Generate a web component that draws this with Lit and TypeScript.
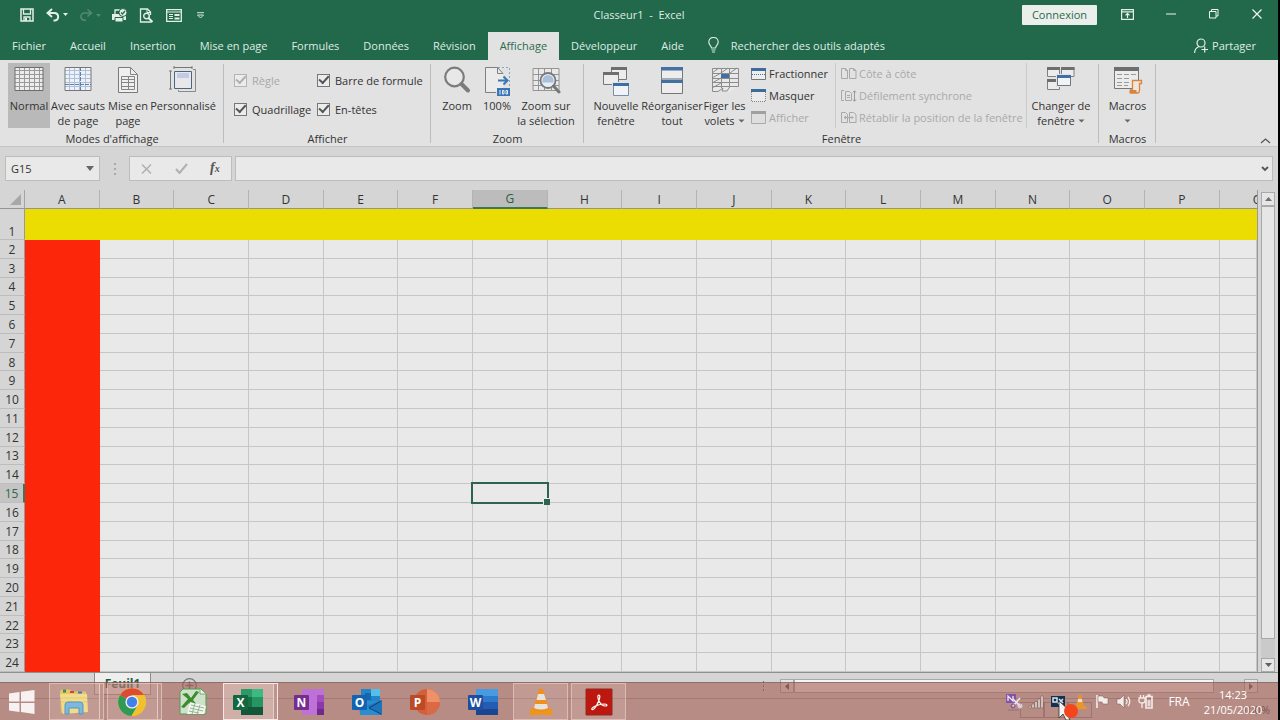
import { LitElement, html, svg, css } from "lit";
import { customElement } from "lit/decorators.js";
import { classMap } from "lit/directives/class-map.js";

const icon = (w: number, h: number, body: unknown) =>
  html`<svg width=${w} height=${h} viewBox="0 0 ${w} ${h}" fill="none" aria-hidden="true">${body}</svg>`;

const caret = icon(7, 4, svg`<path d="M0.500 0.500h6l-3 3z" fill="#666"/>`);

const icons = {
  save: icon(14, 14, svg`<path d="M1 1h12v12H1z" stroke="#e4efe8" stroke-width="1.500"/><path d="M3.500 1v5h7V1M4 13V9h6v4" stroke="#e4efe8" stroke-width="1.300"/><path d="M5 10h2v3H5z" fill="#e4efe8"/>`),
  undo: icon(22, 14, svg`<path d="M2 5h7a3.800 3.800 0 0 1 0 7.500H7.500" stroke="#e4efe8" stroke-width="1.900"/><path d="M6 1L1.500 5L6 9" stroke="#e4efe8" stroke-width="1.900"/><path d="M17 5h5l-2.500 3z" fill="#e4efe8"/>`),
  redo: icon(22, 14, svg`<g opacity=".25"><path d="M12 5H5.500a3.600 3.600 0 0 0 0 7.200H7M8.500 1.500L12.500 5L8.500 8.500" stroke="#e4efe8" stroke-width="1.600"/><path d="M17 6h5l-2.500 3z" fill="#e4efe8"/></g>`),
  print: icon(17, 15, svg`<path d="M1 6h14v6H1z" fill="#e4efe8"/><path d="M4 6V2h5" stroke="#e4efe8" stroke-width="1.300"/><path d="M4 9.500h8v4.500H4z" fill="#e4efe8" stroke="#22684a"/><circle cx="12" cy="4.500" r="4" fill="#e4efe8" stroke="#22684a"/><path d="M10 4.500l1.500 1.500L14 3" stroke="#22684a" stroke-width="1.200"/>`),
  preview: icon(15, 15, svg`<path d="M12.500 14H1.500V1h7l3 3v3" stroke="#e4efe8" stroke-width="1.300"/><path d="M8 1v3.500h3.500" stroke="#e4efe8"/><circle cx="7.500" cy="8" r="2.800" stroke="#e4efe8" stroke-width="1.400"/><path d="M9.500 10l4 4" stroke="#e4efe8" stroke-width="2"/>`),
  form: icon(16, 13, svg`<path d="M.7.700h14.600v11.600H.7z" stroke="#e4efe8" stroke-width="1.300"/><path d="M1 3h14M3 5.500h4M3 7.500h4M3 9.500h4" stroke="#e4efe8" stroke-width="1.200"/><path d="M8.500 5h5v2h-5zM8.500 8.500h5v2h-5z" fill="#e4efe8"/>`),
  more: icon(9, 7, svg`<path d="M1 .7h7M1.500 3h6l-3 3z" stroke="#d4e4da"/>`),
  ribbonOpt: icon(13, 11, svg`<path d="M.6.600h11.800v9.800H.6zM.6 2.800h11.800" stroke="#e4efe8" stroke-width="1.200"/><path d="M6.500 9V4.500M4.500 6.300l2-2 2 2" stroke="#e4efe8" stroke-width="1.200"/>`),
  min: icon(10, 2, svg`<path d="M0 1h10" stroke="#f0f5f2"/>`),
  restore: icon(10, 10, svg`<path d="M.5 2.500h6.500V9H.5zM2.500 2.500v-2h6.500V7H7" stroke="#f0f5f2"/>`),
  close: icon(10, 10, svg`<path d="M.5.500l9 9M9.500.500l-9 9" stroke="#f0f5f2" stroke-width="1.200"/>`),
  bulb: icon(11, 16, svg`<path d="M3.500 11c0-2-2.700-3-2.700-6a4.700 4.700 0 0 1 9.400 0c0 3-2.700 4-2.700 6zM3.500 13h4M4 15h3" stroke="#d6e6dc" stroke-width="1.200"/>`),
  share: icon(14, 15, svg`<circle cx="7" cy="5" r="4" stroke="#e4efe8" stroke-width="1.200"/><path d="M.6 15c0-3.500 2-5.500 4.400-6.500M7.500 11.500H14M10.700 8.500v6" stroke="#e4efe8" stroke-width="1.200"/>`),
  normal: icon(30, 26, svg`<path d="M1 1.500h28v23H1z" fill="#ececec"/><path d="M1 4.500h28M1 8.500h28M1 12.500h28M1 16.500h28M1 20.500h28M5.500 1v24M10.500 1v24M15.500 1v24M20.500 1v24M25.500 1v24" stroke="#9a9a9a"/><path d="M1 1.500h28v23H1z" stroke="#6d6d6d"/>`),
  breaks: icon(28, 26, svg`<path d="M1 1.500h26v23H1z" fill="#eef2f8"/><path d="M1 4.500h26M1 8.500h26M1 12.500h26M1 16.500h26M1 20.500h26M5.500 1v24M10.500 1v24M15.500 1v24M21.500 1v24" stroke="#adc0da"/><path d="M1 18.500h26M16.500 1v24" stroke="#5d7fa8" stroke-dasharray="4 1"/><path d="M1 1.500h26v23H1z" stroke="#777"/>`),
  page: icon(22, 28, svg`<path d="M1.500 1.500h12l7 7v18h-19z" fill="#efefef" stroke="#7b7b7b"/><path d="M13.500 1.500v7h7M4.500 10.500h13v13h-13zM4.500 13.500h13M4.500 16.500h13M4.500 20.500h13M11.500 10v13" stroke="#858585"/>`),
  custom: icon(28, 27, svg`<path d="M5.500 5.500h17v17h-17z" fill="#e8e8ea" stroke="#4d6480"/><path d="M8 7h12v5H8z" fill="#c2cbe6"/><path d="M5 1.500h18M5 0v3M23 0v3M1.500 5v18M0 5h3M0 23h3" stroke="#777"/><path d="M24 3.500h2.500v22h-17V24" stroke="#8a8a8a"/>`),
  zoom: icon(28, 28, svg`<circle cx="11.500" cy="11" r="9.300" fill="#e8e8e8" stroke="#7b7b7b" stroke-width="2.200"/><path d="M18.500 18l6.500 6.500" stroke="#7b7b7b" stroke-width="4" stroke-linecap="round"/>`),
  hundred: icon(26, 30, svg`<path d="M1.500 1.500h12l5.500 6v18h-17.500z" fill="#ebebeb"/><path d="M12 26.500H1.500v-25h12l5.500 6" stroke="#808080"/><path d="M13.500 1.500v6H19" stroke="#808080"/><path d="M14 1.500h11.500V20" stroke="#8aa5c6" stroke-dasharray="2 2"/><path d="M14 14.500h9M19.500 10.500l4 4-4 4" stroke="#3a76b5" stroke-width="2"/><path d="M13 22h13v8H13z" fill="#3a76b5"/><path d="M16 24v4.500M18.500 24.500h1.500v3.500h-1.500zM22 24.500h1.500v3.500H22z" stroke="#e4ecf6"/>`),
  zoomSel: icon(30, 28, svg`<path d="M2 2.500h26v22H2zM2 8.500h26M2 14.500h26M2 19.500h26M7.500 2v22M13.500 2v22M20.500 2v22" fill="#e9e9e9" stroke="#949494"/><circle cx="17" cy="14.500" r="7.500" fill="#e6edf5" stroke="#777" stroke-width="1.800"/><path d="M11.500 14.500a5.500 5.500 0 0 1 11 0v2h-11z" fill="#a9c0db"/><path d="M22.500 20l5.500 6" stroke="#777" stroke-width="3" stroke-linecap="round"/>`),
  newWin: icon(28, 30, svg`<path d="M9.500 1.500h15v12h-15z" fill="#ececec" stroke="#777"/><path d="M9 1h16v3H9z" fill="#6e6e6e"/><path d="M1.500 6.500h15v12h-15z" fill="#ececec" stroke="#777"/><path d="M1 6h16v3H1z" fill="#6e6e6e"/><path d="M10 16h16v14H10z" fill="#e2e2e2"/><path d="M11.500 17.500h15v12h-15z" fill="#f0f3f7" stroke="#7a8ea8"/><path d="M11 17h16v3H11z" fill="#3c6ea8"/>`),
  arrange: icon(24, 28, svg`<path d="M1.500 1.500h21v26h-21z" fill="#ededed" stroke="#777"/><path d="M1 1h22v3.500H1zM1 13.500h22V17H1z" fill="#44719f"/><path d="M1.500 12.500h21" stroke="#aaa"/>`),
  freeze: icon(28, 27, svg`<path d="M1.500 2.500h26v17l-8 6H14l-4-1-6 1H1.500z" fill="#e8e8e8"/><path d="M19 20.500l-3 4.500h-5l1-3-5 3.500H1.500v-23h26v18H1.500M1.500 7.500h26M1.500 12.500h26M1.500 16.500h26M10.500 2v20M18.500 2v19M1 7l7-5M10 7l7-5M19 7l7-5M1 12l9-5M1 17l9-5M1 22l9-5" stroke="#8c8c8c"/><path d="M10 8h8v4h-8z" fill="#416fa3"/>`),
  split: icon(15, 12, svg`<path d="M.5.500h14v11H.5z" fill="#ededed" stroke="#777"/><path d="M0 0h15v3H0z" fill="#3f6c9e"/><path d="M1 6.500h13" stroke="#50759e" stroke-dasharray="1 1"/>`),
  hide: icon(15, 13, svg`<path d="M.5 3v9.500h14V3" fill="#ebebeb" stroke="#858585" stroke-dasharray="1 1"/><path d="M0 0h15v3H0z" fill="#3f6c9e"/>`),
  show: icon(15, 13, svg`<path d="M.5.500h14v12H.5z" fill="#dedede" stroke="#aaa"/><path d="M0 0h15v3H0z" fill="#a0a0a0"/>`),
  side: icon(16, 11, svg`<path d="M.5.500h4l2 2v8h-6zM8.500.500h4l2.500 2v8H8.500zM4.500.500v2h2M12.500.500v2H15" stroke="#a8a8a8"/>`),
  sync: icon(16, 12, svg`<path d="M3 10.500H.5V.500H3M4.500 1.500h4l2 2v7h-6zM6 5.500h3M6 7.500h3" stroke="#a8a8a8"/><path d="M13.500 1v10M12 2.500L13.500.700 15 2.500M12 9.500l1.500 1.800L15 9.500" stroke="#999"/>`),
  reset: icon(16, 11, svg`<path d="M.5.500h4l2 2v8h-6zM8.500.500h4l2.500 2v8H8.500zM3 5.500h9M5 4L3 5.500 5 7M10.500 4L12 5.500 10.500 7" stroke="#a8a8a8"/>`),
  switchWin: icon(28, 25, svg`<path d="M.5 1.500h12v9H.5zM14.500 1.500h12.500v9H14.500zM.5 14.500h12v9H.5z" fill="#ececec" stroke="#808080"/><path d="M0 1h13v3H0zM14 1h13.500v3H14zM0 13h13v3H0z" fill="#6e6e6e"/><path d="M9 8h15v13H9z" fill="#e2e2e2"/><path d="M10.500 9.500h13v10h-13z" fill="#f0f3f7" stroke="#777"/><path d="M10 9h14v3H10z" fill="#3f6fa6"/>`),
  macros: icon(30, 28, svg`<path d="M1.500 1.500h24v21h-24z" fill="#ececec" stroke="#777"/><path d="M1 1h25v4H1z" fill="#6e6e6e"/><path d="M4 8.500h5M11 8.500h5M18 8.500h5M4 12.500h5M11 12.500h5M4 16.500h5M11 16.500h5M4 19.500h5M11 19.500h4" stroke="#9a9a9a"/><path d="M19.500 14.500h9v3h-2v7q0 2-2 2.500h-7v-3h2z" fill="#efe7df" stroke="#d8843f" stroke-width="1.300"/><path d="M16.500 24h7v3h-7z" fill="#d8843f"/>`),
  collapse: icon(11, 6, svg`<path d="M1 5l4.500-4L10 5" stroke="#555" stroke-width="1.200"/>`),
  cross: icon(11, 10, svg`<path d="M1 .5l9 9M10 .5l-9 9" stroke="#b0b0b0" stroke-width="1.500"/>`),
  tick: icon(13, 11, svg`<path d="M1 6l3.500 4L12 1" stroke="#b0b0b0" stroke-width="2"/>`),
  down: icon(9, 6, svg`<path d="M0 0h8L4 5z" fill="#666"/>`),
  chevron: icon(8, 6, svg`<path d="M1 1l3 3 3-3" stroke="#555" stroke-width="1.800"/>`),
  triUp: icon(7, 4, svg`<path d="M0 4h7L3.500 0z" fill="#707070"/>`),
  triDown: icon(7, 4, svg`<path d="M0 0h7L3.500 4z" fill="#606060"/>`),
  triLeft: icon(4, 7, svg`<path d="M4 0v7L0 3.500z" fill="#555"/>`),
  triRight: icon(4, 7, svg`<path d="M0 0v7l4-3.500z" fill="#666"/>`),
  plus: icon(15, 15, svg`<circle cx="7.500" cy="7.500" r="6.800" stroke="#777" stroke-width="1.200"/><path d="M7.500 3.500v8M3.500 7.500h8" stroke="#777" stroke-width="1.500"/>`),
};

const office = (letter: string, dark: string, art: unknown) => html`<svg width="32" height="28" viewBox="0 0 32 28" aria-hidden="true">
  ${art}
  <rect x="1" y="7" width="15" height="15" rx="1" fill=${dark}/>
  <text x="8.500" y="18.500" text-anchor="middle" font-size="12" font-weight="700" fill="#fff" font-family="Open Sans, sans-serif">${letter}</text>
</svg>`;

const apps = [
  { name: "Explorateur de fichiers", open: true, stack: true, art: icon(32, 28, svg`<path d="M2 3l2-1.500h8l2 2h14v20L3 25z" fill="#e3c66a"/><path d="M5 1.500h3v3H5z" fill="#3f8b4b"/><path d="M12 3h4v2h-4z" fill="#c44"/><path d="M20 3.500h4v2h-4z" fill="#4573bd"/><path d="M2 6h27l1 18-25 2z" fill="#f1dc8e"/><path d="M3 10h26M3 14h26" stroke="#e2c973"/><path d="M7 17q0-3 3-3h12q3 0 3 3v9h-4v-6H11v6H7z" fill="#7db9de" stroke="#5795c0"/>`) },
  { name: "Google Chrome", open: true, stack: true, art: html`<svg width="28" height="28" viewBox="0 0 28 28" aria-hidden="true"><circle cx="14" cy="14" r="14" fill="#f2bf2e"/><path d="M14 14L2 7A14 14 0 0 1 26.100 7H14z" fill="#dc4a38"/><path d="M14 14L1.900 7A14 14 0 0 0 13.500 28L20 17z" fill="#2f9a55"/><path d="M14 7h12.100A14 14 0 0 1 13.500 28L20 17z" fill="#f2bf2e"/><circle cx="14" cy="14" r="6.600" fill="#eee"/><circle cx="14" cy="14" r="5.200" fill="#4180e8"/></svg>` },
  { name: "Excel 2010", open: false, art: icon(30, 28, svg`<path d="M5 1h18l5 5v20H2V4z" fill="#cfe0cb" stroke="#4d9c50"/><path d="M22 1v5h6" fill="#f0f5ee" stroke="#6faf6c"/><path d="M4 6l5-1 4 5 5-7 3 1-6 8 6 7-6 1-4-5-5 5-3-1 7-8z" fill="#3c8c2d"/><path d="M12 14l16 4-2 8H9z" fill="#f2f5ef"/><path d="M13 17l13 3M12 20l13 3M11 23l10 2M17 15l-3 11M22 17l-3 9" stroke="#93b793"/>`) },
  { name: "Excel", open: true, stack: true, art: office("X", "#13683f", svg`<path d="M9 1h11v8H9z" fill="#2a9b66"/><path d="M20 1h11v8H20z" fill="#3fb982"/><path d="M9 9h11v10H9z" fill="#17724a"/><path d="M20 9h11v10H20z" fill="#259561"/><path d="M9 19h22v8H9z" fill="#14563a"/>`) },
  { name: "OneNote", open: false, art: office("N", "#762c91", svg`<path d="M9 1h22v26H9z" fill="#be72d8"/><path d="M24 7h7v7h-7z" fill="#a24cc0"/><path d="M24 14h7v7h-7z" fill="#8a3aa8"/><path d="M24 21h7v6h-7z" fill="#6f2a89"/>`) },
  { name: "Outlook", open: false, art: office("O", "#1264b0", svg`<path d="M10 1h19v14H10z" fill="#2385c9"/><path d="M20 1h9v7h-9z" fill="#55bfea"/><path d="M14 5h6v7h-6z" fill="#1668ad"/><path d="M8 13h23v14H9z" fill="#278fd1"/><path d="M31 12v15L16 18z" fill="#1c74bd"/><path d="M30 13L18 20l12 6" stroke="#123d71" fill="none"/>`) },
  { name: "PowerPoint", open: false, art: office("P", "#bd4a25", svg`<circle cx="18" cy="14" r="13" fill="#d4603b"/><path d="M18 1a13 13 0 0 1 13 13H18z" fill="#ee9068"/><path d="M18 14h13a13 13 0 0 1-13 13z" fill="#d96a45"/>`) },
  { name: "Word", open: false, art: office("W", "#1d4e9f", svg`<path d="M9 1h22v7H9z" fill="#479be0"/><path d="M9 8h22v6H9z" fill="#2f7acb"/><path d="M9 14h22v7H9z" fill="#235cb2"/><path d="M9 21h22v6H9z" fill="#1a4590"/>`) },
  { name: "VLC", open: true, art: icon(26, 28, svg`<path d="M3 20h20l2 7H1z" fill="#ee951c"/><path d="M11 1q2-1 4 0l6 21q-8 4-16 0z" fill="#ef8f1e"/><path d="M10 6h6l2 6H8.500zM7 16h12l1 4q-7 3-14 0z" fill="#e6e3df"/>`) },
  { name: "Adobe Acrobat", open: true, art: icon(28, 28, svg`<path d="M1 1h26v26H1z" fill="#bd1710" stroke="#8d2a22"/><path d="M14 7c-2 0-1 4 0 6 1.500 3 4.500 5 6.500 5s2-2-.5-2c-4 0-9 1.500-11.500 3s-2 3-.5 2.500c2-.5 5.500-7 6.500-11 .5-2 .5-3.500-.5-3.500z" stroke="#fff" stroke-width="1.200"/>`) },
];

const tray = [
  icon(18, 18, svg`<path d="M1 1h10v9H1z" fill="#8254a5"/><path d="M3 8V3l5 5V3" stroke="#efe6f4" stroke-width="1.300"/><path d="M8 6l8 8M15 5l-7 8" stroke="#e9e1ee" stroke-width="1.600"/><circle cx="8" cy="13" r="2" stroke="#7d549f"/><circle cx="15" cy="13" r="2" stroke="#e9e1ee"/><path d="M3 17h11" stroke="#9a6a92"/>`),
  icon(16, 14, svg`<path d="M1 11h2v2H1zM4 9h2v4H4zM7 6.500h2V13H7zM10 4h2v9h-2zM13 1h2v12h-2z" fill="#f1e8e5" stroke="#6f4e4a" stroke-width=".5"/>`),
  icon(16, 14, svg`<path d="M1 1h14v11H1z" fill="#14314f"/><path d="M3 3h4v4H3zM9 4l4 4M8 9l5-5" stroke="#d8e5ef" stroke-width="1.500"/>`),
  icon(16, 16, svg`<path d="M2 12h12l1 3H1z" fill="#e9962d"/><path d="M7 1h2l3 11H4z" fill="#e9962d"/><path d="M6.300 5h3.400l.8 3h-5z" fill="#ecdcd2"/>`),
  icon(14, 15, svg`<path d="M2 1v13" stroke="#f4ecea" stroke-width="1.600"/><path d="M3 2h5l1 2h4v6H8L7 8H3z" fill="#f4ecea" stroke="#7d5953" stroke-width=".5"/>`),
  icon(16, 15, svg`<path d="M1 5h3l4-4v13l-4-4H1z" fill="#f4ecea" stroke="#7d5953" stroke-width=".5"/><path d="M10 5q2 2.500 0 5M12 3q3.500 4.500 0 9" stroke="#f4ecea" stroke-width="1.300"/>`),
  icon(16, 15, svg`<path d="M8 2.500h6V14H8zM9.500 1h3" stroke="#f4ecea" stroke-width="1.600"/><path d="M9.500 6h3v6.500h-3z" fill="#e8d8d4"/><path d="M1 4h6v3q0 2-3 2-3 0-3-2zM2.500 4V1M5.500 4V1M4 9v5" stroke="#f4ecea" stroke-width="1.300"/>`),
];

const startLogo = icon(28, 24, svg`<path d="M1 3.500L11.500 2v9.500H1zM13 1.800L26.500 0v11.500H13zM1 13h10.500v9L1 20.500zM13 13h13.500v11L13 22z" fill="#f7f2f1"/>`);

const columns = "ABCDEFGHIJKLMNOPQ".split("");
const rows = Array.from({ length: 24 }, (_, i) => i + 1);

@customElement("app-root")
export class AppRoot extends LitElement {
  static styles = css`
    :host { display: block; --green: #22684a; --line: #c6c6c6; }
    * { box-sizing: border-box; }
    button, input { font: inherit; color: inherit; background: none; border: 0; margin: 0; padding: 0; border-radius: 0; }
    svg { display: block; flex: none; }
    .desktop { position: relative; height: 100vh; display: flex; flex-direction: column; overflow: hidden; border-right: 2px solid #000; background: #d5d5d5; color: #333; font: 11px/15px "Open Sans", "Noto Sans", sans-serif; }
    .title { display: grid; grid-template-columns: 1fr auto 1fr; align-items: center; height: 32px; padding-bottom: 2px; background: var(--green); color: #dfece4; flex: none; }
    .title h1 { margin: 0; padding-bottom: 2px; font: inherit; white-space: pre; }
    .quick, .window { display: flex; align-items: center; height: 30px; }
    .quick { padding-left: 13px; }
    .quick button { width: 27px; height: 30px; display: grid; place-items: center; }
    .quick .wide { width: 33px; }
    .window { justify-content: flex-end; }
    .window button { width: 43px; height: 30px; padding-bottom: 2px; display: grid; place-items: center; }
    .window .login { width: 75px; height: 20px; margin-right: 9px; background: #ebefec; color: #28694c; border-radius: 1px; }
    .tabs { display: flex; height: 28px; flex: none; background: var(--green); color: #dfece4; }
    .tabs button { padding: 0 12px 2px; white-space: nowrap; }
    .tabs .on { background: #e2e2e2; color: #2c6b4e; }
    .tabs .tell { display: flex; align-items: center; gap: 12px; }
    .tabs .share { display: flex; align-items: center; gap: 4px; margin-left: auto; padding: 0 22px 2px; }
    .ribbon { display: flex; height: 87px; flex: none; background: #e2e2e2; border-bottom: 1px solid #c4c4c4; position: relative; }
    .group { display: flex; flex-direction: column; justify-content: space-between; padding: 3px 0 0; position: relative; flex: none; }
    .group::after { content: ""; position: absolute; right: 0; top: 4px; bottom: 3px; width: 1px; background: #bdbdbd; }
    .group h2 { margin: 0; font: inherit; text-align: center; height: 15px; }
    .tools { display: flex; height: 65px; padding: 0 4px; }
    .modes { width: 224px; } .modes .tools { padding: 0 8px; }
    .display { width: 207px; } .zooms { width: 153px; } .zooms .tools { padding: 0 6px; }
    .windows { width: 515px; } .macro { width: 57px; }
    .big { display: flex; flex-direction: column; align-items: center; height: 65px; padding-top: 3px; text-align: center; white-space: nowrap; flex: none; }
    .big .pic { height: 32px; display: grid; place-items: center; }
    .big .pic svg { align-self: start; }
    .big span { display: block; height: 15px; }
    .big .more { display: flex; align-items: center; justify-content: center; gap: 3px; }
    .big.on { background: #b9b9b9; }
    .w40 { width: 40px; } .w42 { width: 42px; } .w44 { width: 44px; } .w49 { width: 49px; } .w56 { width: 56px; } .w58 { width: 58px; } .w66 { width: 66px; }
    .checks { display: grid; grid-template-columns: 83px auto; justify-content: start; align-content: start; row-gap: 13px; padding: 9px 10px 0; height: 65px; }
    .checks label { display: flex; align-items: center; gap: 5px; height: 16px; white-space: nowrap; }
    .checks input { appearance: none; width: 13px; height: 13px; flex: none; border: 1px solid #777; background: #ececec; display: grid; place-items: center; }
    .checks input::before { content: ""; width: 8px; height: 4px; border: solid #555; border-width: 0 0 2px 2px; transform: rotate(-48deg) translate(1px, -1px); }
    .checks .off { color: #a9a9a9; }
    .checks .off input { border-color: #b4b4b4; }
    .checks .off input::before { border-color: #b0b0b0; }
    .small { display: flex; flex-direction: column; }
    .small button { display: flex; align-items: center; gap: 3px; height: 22px; white-space: nowrap; }
    .small button:disabled { color: #a9a9a9; }
    .first { width: 84px; margin-left: 2px; }
    .second { width: 192px; padding-left: 5px; margin-right: 5px; border: solid #cbcbcb; border-width: 0 1px; }
    .second button { gap: 2px; }
    .collapse { position: absolute; right: 7px; bottom: 2px; }
    .formula { display: flex; height: 43px; flex: none; padding: 9px 5px; }
    .field { background: #e9e9e9; border: 1px solid #bdbdbd; height: 25px; display: flex; align-items: center; }
    .name { width: 95px; padding: 0 4px 0 5px; }
    .name input { flex: 1; min-width: 0; }
    .grip { width: 29px; display: flex; justify-content: center; padding-top: 7px; }
    .edit { width: 103px; justify-content: space-around; margin-right: 3px; }
    .fx { font: italic 700 14px/16px "Liberation Serif", serif; color: #555; }
    .fx small { font-size: 10px; }
    .bar { flex: 1; padding-right: 3px; }
    .bar input { flex: 1; height: 100%; }
    .work { display: flex; flex: 1; min-height: 0; border-bottom: 1px solid #8f8f8f; }
    .sheet { flex: 1; min-width: 0; display: flex; flex-direction: column; border-right: 1px solid #999; overflow: hidden; font-size: 12px; }
    .sheet thead { display: block; flex: none; }
    .sheet tbody { display: flex; flex-direction: column; flex: 1; min-height: 0; }
    .sheet tr { display: grid; grid-template-columns: 25px repeat(16, 2fr) minmax(0, 1fr); flex: 1; min-height: 0; }
    .sheet thead tr { height: 19px; }
    .sheet tbody .tall { flex: 0 0 31px; }
    .sheet th { font-weight: 400; padding: 0; overflow: hidden; display: flex; justify-content: center; align-items: center; min-height: 0; }
    .sheet thead th { border-right: 1px solid #b4b4b4; border-bottom: 1px solid #949494; }
    .sheet thead .corner { border-right-color: #a5a5a5; justify-content: flex-end; padding-right: 3px; }
    .sheet thead .edge { justify-content: flex-start; padding-left: 33px; border-right: 0; }
    .sheet thead .picked { background: #bcbcbc; color: #2b5c47; border-bottom: 2px solid #39765a; }
    .sheet tbody th { border-right: 1px solid #999; border-bottom: 1px solid #bdbdbd; padding-top: 1px; }
    .sheet tbody .tall th { align-items: flex-end; }
    .sheet tbody .picked { background: #c4c4c4; color: #2b6b4c; border-right: 2px solid #39765a; }
    .sheet td { padding: 0; background: #e9e9e9; border-right: 1px solid var(--line); border-bottom: 1px solid var(--line); position: relative; }
    .sheet .tall td { background: #ebdc02; border-color: #ebdc02; }
    .sheet .red { background: #fc260b; border-color: #fc260b; }
    .cursor { position: absolute; z-index: 1; inset: -2px; border: 2px solid #2d6350; }
    .cursor::after { content: ""; position: absolute; right: -3px; bottom: -3px; width: 6px; height: 6px; background: #2d6350; border: solid #e9e9e9; border-width: 1px 0 0 1px; }
    .vscroll { width: 20px; display: flex; flex-direction: column; align-items: center; padding: 2px 0 0; }
    .arrow { width: 14px; height: 14px; border: 1px solid #aaa; background: #e6e6e6; display: grid; place-items: center; flex: none; }
    .vtrack { width: 14px; flex: 1; background: #cacaca; padding-bottom: 19px; display: flex; }
    .vthumb { flex: 1; background: #e6e6e6; border: 1px solid #a8a8a8; }
    .bottom { display: flex; height: 25px; flex: none; padding-right: 20px; }
    .sheetTab { margin-left: 94px; width: 57px; height: 22px; background: #eee; border: 1px solid #8c8c8c; border-top: 0; color: #1d5b3c; font-size: 12px; font-weight: 700; }
    .add { width: 76px; display: flex; justify-content: center; padding-top: 5px; }
    .dots { margin-left: auto; padding: 8px 15px 0 0; }
    .hscroll { display: flex; width: 38%; height: 14px; margin-top: 6px; }
    .htrack { flex: 1; padding-right: 30px; display: flex; }
    .hthumb { flex: 1; background: #f5f5f5; border: 1px solid #aaa; }
    .status { height: 22px; flex: none; border-top: 1px solid #a5a5a5; display: flex; justify-content: flex-end; align-items: center; padding-right: 8px; color: #444; }
    .views { display: flex; margin-right: 150px; }
    .views i { width: 24px; height: 16px; border: 1px solid #999; }
    .taskbar { position: absolute; left: 0; right: 0; bottom: 0; height: 38px; display: flex; align-items: stretch; background: rgba(164, 92, 80, .6); border-top: 1px solid rgba(120, 90, 82, .6); color: #fff; }
    .start { width: 49px; padding-right: 5px; display: grid; place-items: center; }
    .apps { display: flex; gap: 3px; }
    .apps button { width: 55px; display: grid; place-items: center; border: 1px solid transparent; }
    .apps .open { background: rgba(255, 235, 230, .15); border-color: rgba(240, 215, 208, .55); }
    .apps .active { background: rgba(255, 240, 238, .35); border-color: rgba(255, 240, 238, .85); }
    .apps .stack { padding-right: 6px; box-shadow: inset -3px 0 rgba(180, 135, 127, .8), inset -4px 0 rgba(240, 220, 215, .7); }
    .tray { display: flex; margin-left: auto; align-items: center; }
    .tray button { width: 22px; height: 37px; display: grid; place-items: center; }
    .tray .lang { width: 34px; margin-left: 5px; font-size: 12px; }
    .tray .clock { width: 82px; padding-right: 8px; display: flex; flex-direction: column; justify-content: center; align-items: center; }
    .pointer { position: absolute; right: 198px; bottom: 0; }
  `;

  private big(label: string[], pic: unknown, width: string, opts: { on?: boolean; menu?: boolean } = {}) {
    const last = label.length - 1;
    return html`<button class=${classMap({ big: true, [width]: true, on: !!opts.on })}>
      <div class="pic">${pic}</div>
      ${label.map((t, i) => html`<span class=${opts.menu && i === last ? "more" : ""}>${t}${opts.menu && i === last ? caret : ""}</span>`)}
    </button>`;
  }

  private small(label: string, pic: unknown, disabled = false) {
    return html`<button ?disabled=${disabled}>${pic}${label}</button>`;
  }

  private check(label: string, off = false) {
    return html`<label class=${off ? "off" : ""}><input type="checkbox" checked ?disabled=${off} />${label}</label>`;
  }

  private renderRibbon() {
    return html`<div class="ribbon">
      <section class="group modes"><div class="tools">
        ${this.big(["Normal"], icons.normal, "w42", { on: true })}
        ${this.big(["Avec sauts", "de page"], icons.breaks, "w56")}
        ${this.big(["Mise en", "page"], icons.page, "w44")}
        ${this.big(["Personnalisé"], icons.custom, "w66")}
      </div><h2>Modes d'affichage</h2></section>
      <section class="group display"><div class="checks">
        ${this.check("Règle", true)}${this.check("Barre de formule")}
        ${this.check("Quadrillage")}${this.check("En-têtes")}
      </div><h2>Afficher</h2></section>
      <section class="group zooms"><div class="tools">
        ${this.big(["Zoom"], icons.zoom, "w40")}
        ${this.big(["100%"], icons.hundred, "w40")}
        ${this.big(["Zoom sur", "la sélection"], icons.zoomSel, "w58")}
      </div><h2>Zoom</h2></section>
      <section class="group windows"><div class="tools">
        ${this.big(["Nouvelle", "fenêtre"], icons.newWin, "w56")}
        ${this.big(["Réorganiser", "tout"], icons.arrange, "w56")}
        ${this.big(["Figer les", "volets"], icons.freeze, "w49", { menu: true })}
        <div class="small first">
          ${this.small("Fractionner", icons.split)}${this.small("Masquer", icons.hide)}${this.small("Afficher", icons.show, true)}
        </div>
        <div class="small second">
          ${this.small("Côte à côte", icons.side, true)}${this.small("Défilement synchrone", icons.sync, true)}${this.small("Rétablir la position de la fenêtre", icons.reset, true)}
        </div>
        ${this.big(["Changer de", "fenêtre"], icons.switchWin, "w58", { menu: true })}
      </div><h2>Fenêtre</h2></section>
      <section class="group macro"><div class="tools">
        ${this.big(["Macros", ""], icons.macros, "w49", { menu: true })}
      </div><h2>Macros</h2></section>
      <button class="collapse" aria-label="Réduire le ruban">${icons.collapse}</button>
    </div>`;
  }

  private renderSheet() {
    return html`<table class="sheet">
      <thead><tr>
        <th class="corner">${icon(11, 11, svg`<path d="M11 0v11H0z" fill="#a8a8a8"/>`)}</th>
        ${columns.map((c) => html`<th class=${classMap({ picked: c === "G", edge: c === "Q" })}>${c}</th>`)}
      </tr></thead>
      <tbody>${rows.map((r) => html`<tr class=${r === 1 ? "tall" : ""}>
        <th class=${r === 15 ? "picked" : ""}>${r}</th>
        ${columns.map((c) => html`<td class=${r > 1 && c === "A" ? "red" : ""}>${r === 15 && c === "G" ? html`<div class="cursor"></div>` : ""}</td>`)}
      </tr>`)}</tbody>
    </table>`;
  }

  render() {
    const tabs = ["Fichier", "Accueil", "Insertion", "Mise en page", "Formules", "Données", "Révision", "Affichage", "Développeur", "Aide"];
    return html`<div class="desktop">
      <header class="title">
        <div class="quick">
          <button aria-label="Enregistrer">${icons.save}</button>
          <button class="wide" aria-label="Annuler">${icons.undo}</button>
          <button class="wide" aria-label="Rétablir">${icons.redo}</button>
          <button aria-label="Imprimer">${icons.print}</button>
          <button aria-label="Aperçu">${icons.preview}</button>
          <button aria-label="Formulaire">${icons.form}</button>
          <button aria-label="Personnaliser">${icons.more}</button>
        </div>
        <h1>Classeur1  -  Excel</h1>
        <div class="window">
          <button class="login">Connexion</button>
          <button aria-label="Options du ruban">${icons.ribbonOpt}</button>
          <button aria-label="Réduire">${icons.min}</button>
          <button aria-label="Restaurer">${icons.restore}</button>
          <button aria-label="Fermer">${icons.close}</button>
        </div>
      </header>
      <nav class="tabs">
        ${tabs.map((t) => html`<button class=${t === "Affichage" ? "on" : ""}>${t}</button>`)}
        <button class="tell">${icons.bulb}Rechercher des outils adaptés</button>
        <button class="share">${icons.share}Partager</button>
      </nav>
      ${this.renderRibbon()}
      <div class="formula">
        <div class="field name"><input aria-label="Zone Nom" .value=${"G15"} /><button aria-label="Liste des noms">${icons.down}</button></div>
        <div class="grip">${icon(2, 12, svg`<path d="M0 0h2v2H0zM0 5h2v2H0zM0 10h2v2H0z" fill="#aaa"/>`)}</div>
        <div class="field edit"><button aria-label="Annuler la saisie">${icons.cross}</button><button aria-label="Valider la saisie">${icons.tick}</button><button class="fx" aria-label="Insérer une fonction">f<small>x</small></button></div>
        <div class="field bar"><input aria-label="Barre de formule" /><button aria-label="Développer">${icons.chevron}</button></div>
      </div>
      <main class="work">
        ${this.renderSheet()}
        <div class="vscroll">
          <button class="arrow" aria-label="Haut">${icons.triUp}</button>
          <div class="vtrack"><div class="vthumb"></div></div>
          <button class="arrow" aria-label="Bas">${icons.triDown}</button>
        </div>
      </main>
      <div class="bottom">
        <button class="sheetTab">Feuil1</button>
        <button class="add" aria-label="Nouvelle feuille">${icons.plus}</button>
        <div class="dots">${icon(2, 10, svg`<path d="M0 0h1v2H0zM0 4h1v2H0zM0 8h1v2H0z" fill="#777"/>`)}</div>
        <div class="hscroll">
          <button class="arrow" aria-label="Gauche">${icons.triLeft}</button>
          <div class="htrack"><div class="hthumb"></div></div>
          <button class="arrow" aria-label="Droite">${icons.triRight}</button>
        </div>
      </div>
      <footer class="status"><div class="views"><i></i><i></i><i></i></div>100%</footer>
      <div class="taskbar">
        <button class="start" aria-label="Démarrer">${startLogo}</button>
        <div class="apps">
          ${apps.map((a) => html`<button aria-label=${a.name} class=${classMap({ open: a.open, stack: !!a.stack, active: a.name === "Excel" })}>${a.art}</button>`)}
        </div>
        <div class="tray">
          ${tray.map((t) => html`<button aria-label="Notification">${t}</button>`)}
          <button class="lang">FRA</button>
          <button class="clock"><span>14:23</span><span>21/05/2020</span></button>
        </div>
        <div class="pointer">${icon(22, 20, svg`<path d="M1 1v17l4-4 3 6h4L8 12h5z" fill="#f4f4f4" stroke="#333" stroke-width=".8"/><circle cx="13" cy="11" r="7" fill="#f4451d"/>`)}</div>
      </div>
    </div>`;
  }
}
